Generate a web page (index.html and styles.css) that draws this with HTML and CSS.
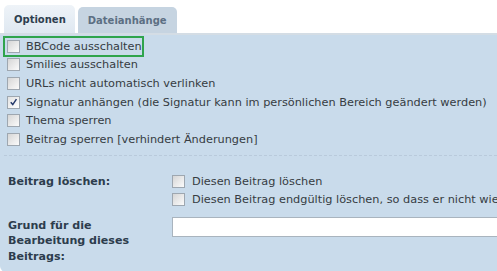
FILE: index.html
```html
<!DOCTYPE html>
<html lang="de">
<head>
<meta charset="utf-8">
<link rel="stylesheet" href="styles.css">
</head>
<body>
<div class="tabs">
  <div class="tab active">Optionen</div>
  <div class="tab">Dateianhänge</div>
</div>
<div class="panel">
  <ul class="opts">
    <li class="hl"><span class="cb"></span>BBCode ausschalten</li>
    <li><span class="cb"></span>Smilies ausschalten</li>
    <li><span class="cb"></span>URLs nicht automatisch verlinken</li>
    <li><span class="cb checked"><svg viewBox="0 0 12 12" width="12" height="12"><path d="M3 6.2 L5.2 8.8 L9.2 2.8" fill="none" stroke="#24386a" stroke-width="1.6"/></svg></span>Signatur anhängen (die Signatur kann im persönlichen Bereich geändert werden)</li>
    <li><span class="cb"></span>Thema sperren</li>
    <li><span class="cb"></span>Beitrag sperren [verhindert Änderungen]</li>
  </ul>
  <div class="sep"></div>
  <div class="row">
    <div class="lbl">Beitrag löschen:</div>
    <div class="fields">
      <div class="opt"><span class="cb"></span>Diesen Beitrag löschen</div>
      <div class="opt"><span class="cb"></span>Diesen Beitrag endgültig löschen, so dass er nicht wie</div>
    </div>
  </div>
  <div class="row reason">
    <div class="lbl">Grund für die<br>Bearbeitung dieses<br>Beitrags:</div>
    <div class="fields"><div class="input"></div></div>
  </div>
</div>
</body>
</html>
```
FILE: styles.css
```css
html, body {
  margin: 0;
  padding: 0;
  background: #fff;
  overflow: hidden;
  width: 497px;
  height: 271px;
}
body {
  font-family: "DejaVu Sans", Verdana, sans-serif;
  font-size: 11.3px;
  color: #363c42;
}
.tabs {
  display: flex;
  align-items: flex-end;
  gap: 3px;
  padding: 5px 0 0 4px;
  height: 28px;
  box-sizing: content-box;
}
.tab {
  height: 26px;
  padding: 0 10px;
  display: flex;
  align-items: center;
  font-weight: bold;
  font-size: 10px;
  border-radius: 5px 5px 0 0;
  background: #c6d4e1;
  color: #5c6f83;
  white-space: nowrap;
}
.tab.active {
  height: 28px;
  background: linear-gradient(#eef3f8, #dfe8f1);
  color: #2e3f4f;
  padding: 0 9px 0 10px;
}
.panel {
  border-top: 2px solid #d4dde5;
  background: #c9dbeb;
  height: 235px;
  border-bottom-left-radius: 6px;
  padding-top: 2px;
  box-sizing: content-box;
}
.opts {
  list-style: none;
  margin: 0;
  padding: 0;
}
.opts li {
  display: flex;
  align-items: center;
  height: 18.6px;
  padding-left: 7px;
  white-space: nowrap;
  position: relative;
}
.opts li.hl::after {
  content: "";
  position: absolute;
  left: 3px;
  top: -1px;
  width: 137px;
  height: 17px;
  border: 2px solid #2fa44c;
}
.cb {
  width: 11px;
  height: 11px;
  border: 1px solid #9ea7b0;
  background: linear-gradient(135deg, #d6d6d6, #fbfbfb);
  margin-right: 6px;
  flex: none;
  display: flex;
  align-items: center;
  justify-content: center;
}
.cb svg { display: block; }
.checked {
  background: linear-gradient(135deg, #e2e2e2, #ffffff);
}
.sep {
  margin: 6px 0 0 4px;
  border-top: 1px dashed #b9cadb;
  height: 0;
}
.row {
  display: flex;
  padding-left: 8px;
}
.lbl {
  width: 164px;
  flex: none;
  font-weight: bold;
  font-size: 11.1px;
  color: #2d3d4d;
  line-height: 15.5px;
}
.fields { flex: 1; min-width: 0; overflow: hidden; }
.sep + .row { margin-top: 17px; }
.sep + .row .lbl { line-height: 18px; }
.opt {
  display: flex;
  align-items: center;
  height: 18px;
  white-space: nowrap;
}
.opt .cb { margin-right: 7px; }
.reason { margin-top: 8px; }
.reason .lbl { padding-top: 1px; }
.input {
  height: 18px;
  background: #fff;
  border: 1px solid #a9b4be;
  width: 400px;
}
```
